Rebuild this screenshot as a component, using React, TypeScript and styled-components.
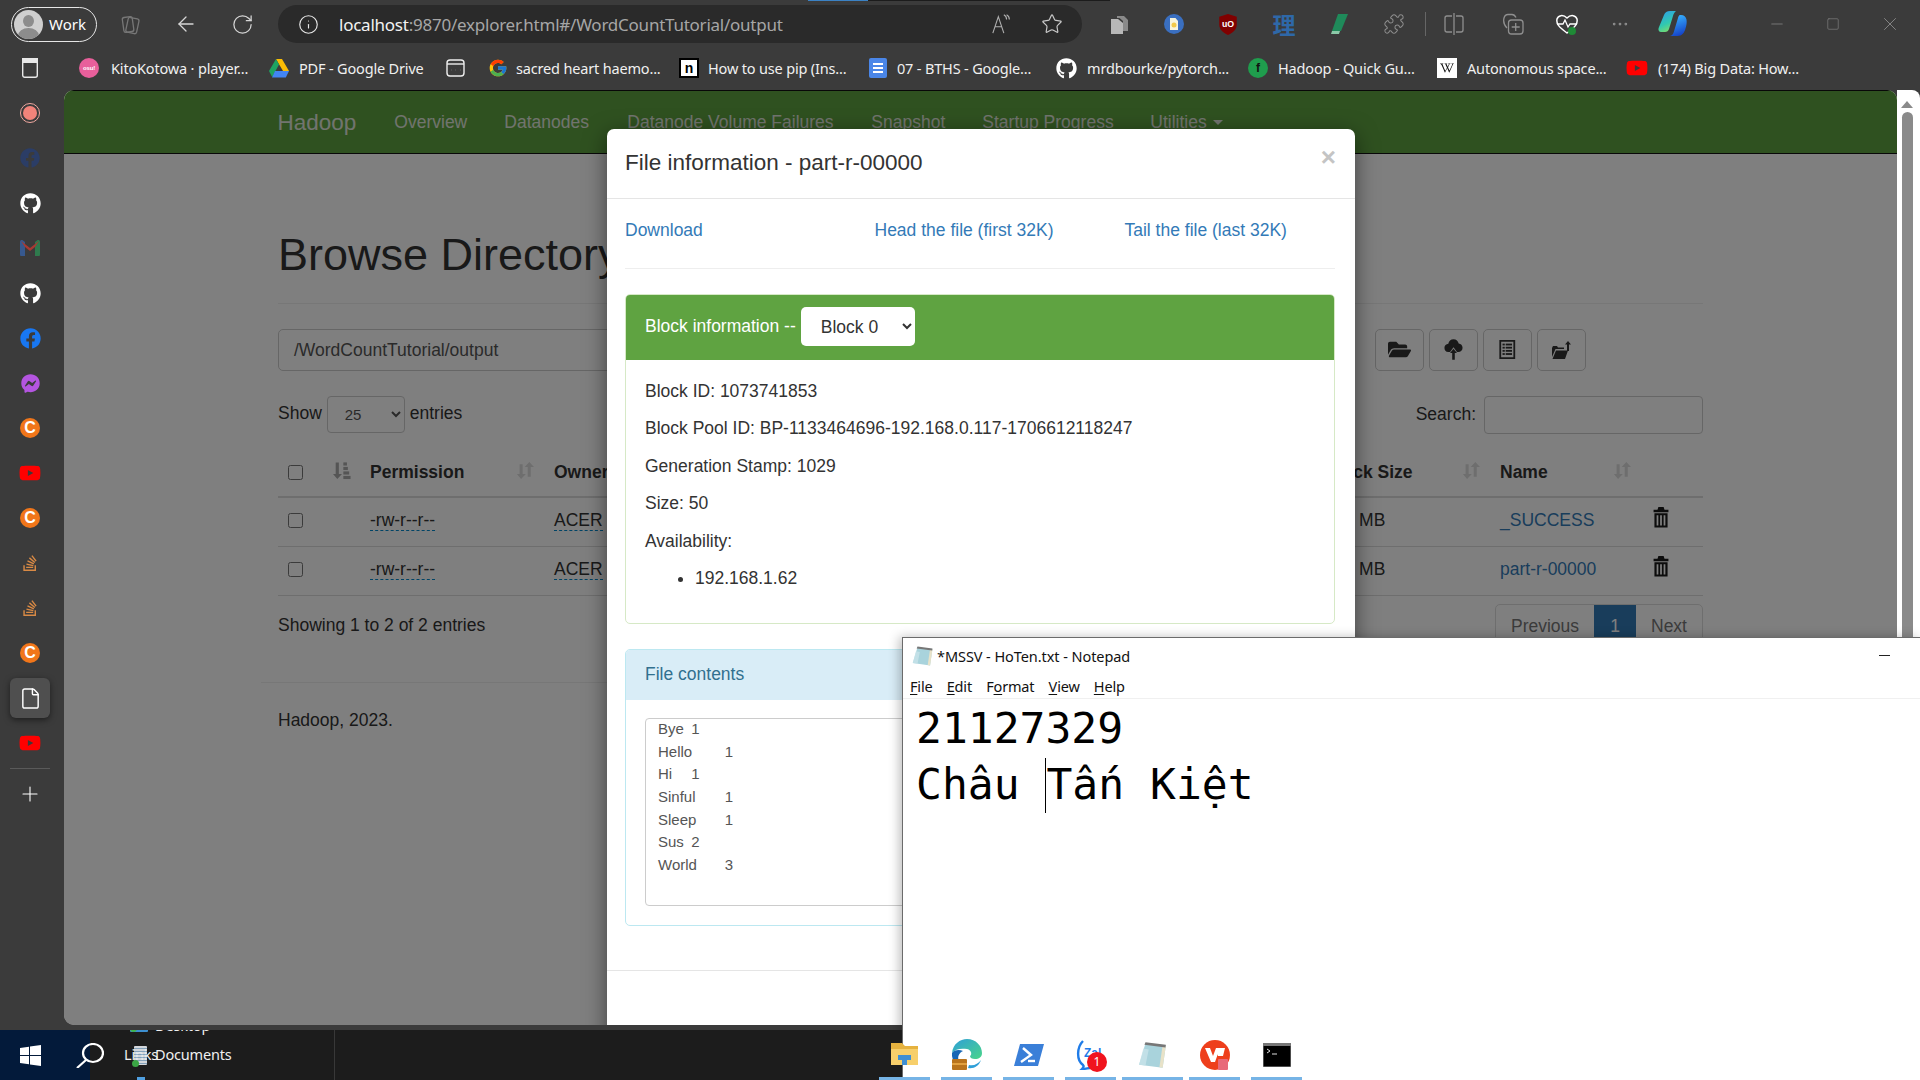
import React from "react";
import styled, { createGlobalStyle } from "styled-components";
import { ArrowLeft, RotateCw, Info, Star, Plus, File as FileIcon, Minus, X, Puzzle, MoreHorizontal, Square } from "lucide-react";
import { FaGithub, FaFacebook, FaFacebookMessenger, FaYoutube, FaStackOverflow, FaWikipediaW, FaFolderOpen } from "react-icons/fa";
import { FcGoogle } from "react-icons/fc";

const Global = createGlobalStyle`
  html, body { margin: 0; padding: 0; overflow: hidden; background: #3b3b3b; }
  * { box-sizing: border-box; }
`;
const chromeFont = `"Noto Sans", "Open Sans", sans-serif`;
const pageFont = `"Liberation Sans", Arial, sans-serif`;

const Screen = styled.div`
  position: relative; width: 1920px; height: 1080px; overflow: hidden;
  display: flex; flex-direction: column; background: #3b3b3b; font-family: ${pageFont};
`;
const Toolbar = styled.div`
  position: relative; height: 52px; flex: none; display: flex; align-items: center; color: #d6d6d6; padding-bottom: 4px;
`;
const TabAccent = styled.div`
  position: absolute; top: 0; left: 808px; width: 302px; height: 1px; background: #1c1c1c;
  &::before { content: ""; position: absolute; left: 0; top: 0; width: 60px; height: 1px; background: #3b82c4; }
`;
const ProfilePill = styled.div`
  margin-left: 11px; width: 86px; height: 35px; border: 1.5px solid #e6e6e6; border-radius: 18px;
  display: flex; align-items: center; gap: 6px; padding-left: 2px; color: #fff;
  font: 15px ${chromeFont};
`;
const Avatar = styled.div`
  position: relative; width: 29px; height: 29px; border-radius: 50%; background: #cfcfcf; overflow: hidden;
  &::before { content: ""; position: absolute; left: 9px; top: 5px; width: 11px; height: 12px; border-radius: 50%; background: #8c8c8c; }
  &::after { content: ""; position: absolute; left: 4px; top: 18px; width: 21px; height: 16px; border-radius: 50%; background: #8c8c8c; }
`;
const ToolIcon = styled.span<{ $w?: number; $gap?: number; $color?: string }>`
  display: flex; align-items: center; justify-content: center; flex: none;
  width: ${p => p.$w ?? 30}px; margin-left: ${p => p.$gap ?? 0}px; color: ${p => p.$color ?? "#d6d6d6"};
`;
const CjkIcon = styled(ToolIcon)`
  font: 700 23px "Noto Sans CJK SC", sans-serif;
`;
const Omnibox = styled.div`
  margin-left: 21px; width: 804px; height: 38px; border-radius: 19px; background: #2a2a2a;
  display: flex; align-items: center; padding-left: 20px; flex: none;
`;
const Url = styled.div`
  margin-left: 20px; flex: 1; font: 17px ${chromeFont}; letter-spacing: -0.24px; color: #a6a6a6; white-space: nowrap;
  b { font-weight: 400; color: #f2f2f2; }
`;
const VDivider = styled.div`
  width: 1px; height: 24px; background: #666; margin-left: 16px; flex: none;
`;
const BookmarkBar = styled.div`
  height: 38px; flex: none; display: flex; align-items: center; position: relative; padding: 0 0 6px 19px; color: #f0f0f0;
  font: 14.5px ${chromeFont}; letter-spacing: -0.17px;
`;
const Bookmark = styled.div<{ $w: number; $gap: number }>`
  width: ${p => p.$w}px; flex: none; display: flex; align-items: center; gap: ${p => p.$gap}px; white-space: nowrap;
`;
const Favicon = styled.span<{ $bg?: string; $color?: string; $r?: string; $size?: number; $line?: string }>`
  width: 20px; height: 20px; flex: none; display: flex; align-items: center; justify-content: center;
  background: ${p => p.$bg ?? "transparent"}; color: ${p => p.$color ?? "#fff"}; border-radius: ${p => p.$r ?? "0"};
  border: ${p => p.$line ?? "0"}; font: 700 ${p => p.$size ?? 12}px ${pageFont};
`;
const Main = styled.div`
  height: 935px; flex: none; display: flex;
`;
const Sidebar = styled.div`
  width: 64px; flex: none; display: flex; flex-direction: column; align-items: center; padding: 3px 4px 0 0;
`;
const SideSlot = styled.div<{ $active?: boolean }>`
  width: 40px; height: 40px; margin-bottom: 5px; flex: none; display: flex; align-items: center; justify-content: center;
  border-radius: 6px; background: ${p => (p.$active ? "#4f4f4f" : "transparent")};
  box-shadow: ${p => (p.$active ? "0 2px 6px rgba(0,0,0,.5)" : "none")}; color: #fff;
`;
const SideRule = styled.div`
  width: 40px; height: 1px; background: #5a5a5a; margin: 0 0 5px;
`;
const CBadge = styled.span`
  width: 20px; height: 20px; border-radius: 50%; background: #f1761a; color: #fff; display: flex; align-items: center; justify-content: center;
  font: 700 16px ${pageFont};
`;
const RecordDot = styled.span`
  width: 20px; height: 20px; border-radius: 50%; border: 1.5px solid #f0a8a0; display: flex; align-items: center; justify-content: center;
  &::after { content: ""; width: 14px; height: 14px; border-radius: 50%; background: #f2837a; }
`;
const Frame = styled.div`
  position: relative; width: 1833px; flex: none; overflow: hidden; background: #fff; border-radius: 10px 10px 0 10px;
  color: #333; font: 17.5px/25px ${pageFont};
`;
const ScrollTrack = styled.div`
  flex: 1; background: #fff; position: relative; border-radius: 0 8px 0 0; padding: 11px 7px 0 4px; display: flex; flex-direction: column; align-items: center; gap: 4px;
`;
const ScrollArrow = styled.div`
  width: 0; height: 0; border: 6px solid transparent; border-top: 0; border-bottom: 7px solid #8a8a8a;
`;
const ScrollThumb = styled.div`
  width: 11px; height: 600px; background: #8a8a8a; border-radius: 6px;
`;
const Navbar = styled.nav`
  height: 64px; background: #5fa341; border-top: 1px solid #111; border-bottom: 1px solid #111;
  display: flex; align-items: center; padding-left: 213.5px; color: #e2e8de; font-size: 17.5px;
`;
const Brand = styled.span`
  font-size: 22.5px; margin-right: 38px;
`;
const NavLink = styled.span<{ $w: number }>`
  width: ${p => p.$w}px; flex: none; white-space: nowrap;
`;
const Caret = styled.span`
  display: inline-block; margin-left: 6px; vertical-align: middle; border: 5px solid transparent; border-bottom: 0; border-top-color: currentColor;
`;
const Container = styled.div`
  width: 1425px; margin-left: 214px;
`;
const Title = styled.h1`
  margin: 76px 0 0; padding-bottom: 23px; font-size: 45px; line-height: 49.5px; font-weight: 500; border-bottom: 1px solid #eee; white-space: nowrap;
`;
const PathRow = styled.div`
  display: flex; margin-top: 25px; height: 42px; justify-content: space-between;
`;
const PathInput = styled.div`
  width: 720px; height: 42px; border: 1px solid #ccc; border-radius: 5px; padding: 0 15px; line-height: 40px; color: #555;
`;
const ActionGroup = styled.div`
  display: flex; gap: 5px; margin-right: 117px;
`;
const ActionButton = styled.div`
  width: 49px; height: 42px; border: 1px solid #ccc; border-radius: 5px; display: flex; align-items: center; justify-content: center; color: #333;
`;
const FilterRow = styled.div`
  display: flex; justify-content: space-between; align-items: center; margin-top: 25px; height: 38px;
`;
const ShowLabel = styled.label`
  display: flex; align-items: center; gap: 5px; margin-top: -3px;
`;
const SmallSelect = styled.select`
  width: 78px; height: 37px; margin-top: 3px; border: 1px solid #ccc; border-radius: 4px; background: #fff; padding-left: 13px; color: #555; font: 15px ${pageFont};
`;
const SearchLabel = styled.label`
  display: flex; align-items: center; gap: 8px; margin-right: 0;
`;
const SearchInput = styled.div`
  width: 219px; height: 38px; border: 1px solid #ccc; border-radius: 4px;
`;
const TableGrid = styled.div<{ $head?: boolean }>`
  display: grid; grid-template-columns: 63px 29px 184px 771px 175px 153px 50px;
  align-items: center; height: ${p => (p.$head ? "51px" : "49px")}; margin-top: ${p => (p.$head ? "13px" : "0")};
  border-bottom: ${p => (p.$head ? "2px solid #ddd" : "1px solid #ddd")};
  font-weight: ${p => (p.$head ? 700 : 400)}; padding: ${p => (p.$head ? "2px 0 0" : "0 0 3px")};
  &:last-of-type { border-bottom-color: transparent; }
`;
const Check = styled.input`
  width: 15px; height: 15px; margin: 0 0 0 10px; display: block;
`;
const SortCell = styled.span`
  display: flex; align-items: center; justify-content: space-between; white-space: nowrap; padding-right: 20px;
`;
const SortIconWrap = styled.span<{ $strong?: boolean; $shift?: number; $end?: number }>`
  display: inline-flex; color: ${p => (p.$strong ? "#aaa" : "#dcdcdc")}; margin-top: -4px;
  margin-left: ${p => p.$shift ?? 0}px; margin-right: ${p => p.$end ?? 0}px;
`;
const Editable = styled.span`
  border-bottom: 1px dashed #0088cc;
`;
const TrashCell = styled.span`
  display: flex; margin-top: -6px;
`;
const Link = styled.a`
  color: #337ab7;
`;
const FootRow = styled.div`
  display: flex; justify-content: space-between; align-items: flex-start; margin-top: 8px;
`;
const FootInfo = styled.span`
  padding-top: 9px;
`;
const Pagination = styled.div`
  display: flex; height: 42px; border: 1px solid #ddd; border-radius: 5px 5px 0 0; color: #777; width: 208px; overflow: hidden;
`;
const PageCell = styled.span<{ $active?: boolean; $w: number }>`
  width: ${p => p.$w}px; flex: none; text-align: center; line-height: 40px; padding-top: 1px; background: ${p => (p.$active ? "#337ab7" : "transparent")};
  color: ${p => (p.$active ? "#fff" : "inherit")};
`;
const FooterRule = styled.hr`
  width: 1463px; margin: 36px 0 0 -17px; border: 0; border-top: 1px solid #eee;
`;
const FooterText = styled.p`
  margin: 25px 0 0;
`;
const Backdrop = styled.div`
  position: absolute; inset: 0; background: rgba(0,0,0,.5);
`;
const Modal = styled.div`
  position: absolute; left: 543px; top: 39px; width: 748px; height: 960px; background: #fff; border-radius: 7px 7px 0 0;
  box-shadow: 0 6px 22px rgba(0,0,0,.5);
`;
const ModalHead = styled.div`
  height: 70px; padding: 0 19px 0 18px; display: flex; align-items: center; justify-content: space-between; border-bottom: 1px solid #e5e5e5;
`;
const ModalTitle = styled.h4`
  margin: -2px 0 0; font-size: 22.5px; font-weight: 500; line-height: 66px;
`;
const Close = styled.span`
  font: 700 26px/1 ${pageFont}; color: #c4c4c4; margin: -14px 0 0 0;
`;
const ModalBody = styled.div`
  padding: 19px 20px 0 18px;
`;
const LinkRow = styled.div`
  display: grid; grid-template-columns: 249.5px 250px 1fr; height: 25px;
`;
const ModalRule = styled.hr`
  margin: 25px 0 25px; border: 0; border-top: 1px solid #eee;
`;
const Panel = styled.div<{ $border: string }>`
  border: 1px solid ${p => p.$border}; border-radius: 5px; margin-bottom: 25px;
`;
const PanelHead = styled.div<{ $bg: string; $color: string; $h: number; $lift?: number }>`
  height: ${p => p.$h}px; background: ${p => p.$bg}; color: ${p => p.$color}; padding: 0 19px ${p => p.$lift ?? 0}px; display: flex; align-items: center; gap: 5px; border-radius: 4px 4px 0 0;
`;
const BlockSelect = styled.select`
  width: 114px; height: 39px; border: 0; border-radius: 5px; background: #fff; padding-left: 16px; color: #333; font: 17.5px ${pageFont}; margin-top: 1px;
`;
const PanelBody = styled.div`
  padding: 18.75px 19px;
`;
const InfoLine = styled.p`
  margin: 0 0 12.5px;
`;
const HostList = styled.ul`
  margin: 0 0 12.5px; padding-left: 50px;
`;
const ContentBox = styled.div`
  height: 188px; border: 1px solid #ccc; border-radius: 4px; padding: 0 12px; font: 15px/22.6px ${pageFont}; color: #555; white-space: pre; tab-size: 8; overflow: hidden;
`;
const ContentText = styled.div`
  margin-top: -1px;
`;
const ModalFooterRule = styled.div`
  margin: 44px -20px 0 -18px; border-top: 1px solid #e5e5e5;
`;
const Notepad = styled.div`
  position: absolute; left: 902px; top: 637px; right: 0; bottom: 0; background: #fff; border-top: 1px solid #6b6b6b; border-left: 1px solid #6b6b6b;
  display: flex; flex-direction: column; color: #000; box-shadow: -3px 0 10px rgba(0,0,0,.25);
`;
const NoteTitle = styled.div`
  height: 36px; flex: none; display: flex; align-items: center; padding-left: 9px; gap: 3px; font: 14.5px ${chromeFont}; letter-spacing: -0.07px; color: #111; position: relative;
`;
const NoteMin = styled.span`
  position: absolute; right: 30px; top: 17px; width: 11px; height: 1px; background: #222;
`;
const NoteMenu = styled.div`
  height: 25px; flex: none; display: flex; gap: 14.2px; padding-left: 7px; font: 14.5px/25px ${chromeFont}; letter-spacing: -0.17px; border-bottom: 1px solid #f0f0f0; color: #111;
  u { text-underline-offset: 2px; }
`;
const NoteText = styled.div`
  padding: 1px 0 0 13px; font: 43px/56px "DejaVu Sans Mono", monospace; white-space: pre; color: #000;
`;
const TextCaret = styled.span`
  display: inline-block; width: 0; height: 55px; border-left: 1px solid #000; vertical-align: -14px;
`;
const GapStrip = styled.div`
  height: 5px; flex: none;
`;
const Taskbar = styled.div`
  position: relative; height: 50px; flex: none; display: flex; z-index: 2;
`;
const StartButton = styled.div`
  width: 90px; background: #031a3a; display: flex; align-items: center; justify-content: center; color: #fff; padding-right: 30px;
`;
const SearchGlass = styled.span`
  position: absolute; left: 76px; top: 13px; display: flex; z-index: 1;
`;
const SearchSlot = styled.div`
  position: relative; width: 245px; background: #1c1c1c; border-right: 1px solid #383838; color: #f0f0f0; overflow: hidden; font: 14.5px ${chromeFont}; letter-spacing: -0.17px;
`;
const Clip = styled.span<{ $l: number; $t: number }>`
  position: absolute; left: ${p => p.$l}px; top: ${p => p.$t}px; white-space: nowrap;
`;
const DocGlyph = styled.span`
  position: absolute; left: 44px; top: 16px; width: 13px; height: 19px; opacity: .9; border-radius: 1px;
  background: repeating-linear-gradient(180deg, #e6ebf0 0 2px, #8fb0cc 2px 3px);
  &::after { content: ""; position: absolute; left: -2px; bottom: -2px; width: 7px; height: 7px; border-radius: 50%; background: #3fb54a; }
`;
const DesktopGlyph = styled.span`
  position: absolute; left: 40px; top: -6px; width: 18px; height: 8px; background: #3d8fd0; border-radius: 1px;
  &::after { content: ""; position: absolute; left: 0; bottom: 0; width: 7px; height: 7px; border-radius: 50%; background: #3fb54a; }
`;
const BlueTick = styled.span`
  position: absolute; left: 47px; bottom: 0; width: 8px; height: 3px; background: #4f9fe0;
`;
const RunningArea = styled.div`
  width: 567px; background: #1c1c1c;
`;
const TaskApps = styled.div`
  position: absolute; left: 879px; top: 0; height: 50px; display: flex;
`;
const TaskApp = styled.div<{ $w: number; $gap: number }>`
  position: relative; width: ${p => p.$w}px; margin-right: ${p => p.$gap}px; display: flex; align-items: center; justify-content: center; padding-bottom: 1px;
  &::after { content: ""; position: absolute; left: 0; right: 0; bottom: 0; height: 3px; background: #76b4e6; }
`;
const ZaloBadge = styled.span`
  position: absolute; left: 22px; top: 22px; width: 20px; height: 20px; border-radius: 50%; background: #f0141e; color: #fff; font: 12px/20px ${chromeFont}; text-align: center;
`;

const Sort = ({ active }: { active?: boolean }) => (
  <svg width="18" height="19" viewBox="0 0 20 20" fill="currentColor">
    {active ? (
      <>
        <path d="M3 1h3.500v13H10l-5.200 5.500L0 14h3z" />
        <rect x="11.500" y="1" width="4" height="3.500" />
        <rect x="11.500" y="6" width="5" height="3.500" />
        <rect x="11.500" y="11" width="6.500" height="3.500" />
        <rect x="11.500" y="16" width="8" height="3.500" />
      </>
    ) : (
      <>
        <path d="M4 3h3.400v11H11l-5.400 5.500L1 14h3z" />
        <path d="M13 17V6H9.600L14.800 .5 20 6h-3.600v11z" />
      </>
    )}
  </svg>
);
const Trash = () => (
  <svg width="16" height="21" viewBox="0 0 18 24" fill="#1a1a1a">
    <path d="M6 0h6l1 3h4.500v3H.5V3H5z" />
    <path fillRule="evenodd" d="M1.500 7h15v16.500h-15zM4 9.500V21h2V9.500zM8 9.500V21h2V9.500zM12 9.500V21h2V9.500z" />
  </svg>
);
const CloudUp = () => (
  <svg width="19" height="21" viewBox="0 0 22 24" fill="currentColor">
    <path d="M11 0c3.200 0 5.500 2.300 6 5 2.600.2 4.500 2.300 4.500 5s-2 5-5 5h-1.500L11 9.500 7 15H5c-3 0-4.500-2.300-4.500-5 0-2.600 2-4.600 4.500-4.800C5.500 2.300 7.800 0 11 0z" />
    <path d="M11 11l4 5h-2.500v8h-3v-8H7z" />
  </svg>
);
const ListAlt = () => (
  <svg width="17" height="19" viewBox="0 0 18 21" fill="currentColor">
    <path fillRule="evenodd" d="M0 0h17.500v21H0zM2 2v17h13.500V2z" />
    <rect x="3.500" y="4" width="2.500" height="2" /><rect x="7" y="4" width="7" height="2" />
    <rect x="3.500" y="7.500" width="2.500" height="2" /><rect x="7" y="7.500" width="7" height="2" />
    <rect x="3.500" y="11" width="2.500" height="2" /><rect x="7" y="11" width="7" height="2" />
    <rect x="3.500" y="14.500" width="2.500" height="2" /><rect x="7" y="14.500" width="7" height="2" />
  </svg>
);
const FolderUp = () => (
  <svg width="20" height="20" viewBox="0 0 20 20" fill="currentColor">
    <path d="M0 8l1-2h4l1 1.500h6V9H3.500L0 17zM4 10.500h12L13 19H.5z" />
    <path d="M16 1l3 3.500h-2V11h-2V4.500h-2z" />
  </svg>
);
const Drive = () => (
  <svg width="20" height="19" viewBox="0 0 20 19">
    <path d="M7 0h6l7 12h-6z" fill="#fbbc04" />
    <path d="M7 0l3 5.500L3.200 18 0 12z" fill="#1ea362" />
    <path d="M6 12h14l-3.200 6.500H3z" fill="#4285f4" />
  </svg>
);
const StackedTabs = () => (
  <svg width="24" height="24" viewBox="0 0 24 24" fill="none" stroke="#777" strokeWidth="1.300">
    <rect x="9" y="6" width="11" height="15" rx="2" transform="rotate(12 14 13)" />
    <rect x="5" y="5" width="10" height="15" rx="2" transform="rotate(-8 10 12)" />
  </svg>
);
const Copilot = () => (
  <svg width="30" height="28" viewBox="0 0 30 28">
    <defs>
      <linearGradient id="cpa" x1="0.2" y1="0" x2="0.6" y2="1"><stop offset="0" stopColor="#2f9fe8" /><stop offset="0.6" stopColor="#30c9b0" /><stop offset="1" stopColor="#7fdc6a" /></linearGradient>
      <linearGradient id="cpb" x1="0.3" y1="0" x2="0.6" y2="1"><stop offset="0" stopColor="#38b6ff" /><stop offset="1" stopColor="#1440c8" /></linearGradient>
    </defs>
    <path d="M12 1h6c-1.500 1-2.500 3-3 5l-4 13c-.6 2-2 3-4 3H3C1 22 0 20 .6 18L6 5c1-2.500 3-4 6-4z" fill="url(#cpa)" />
    <path d="M22 5h1c3 0 5 2 5.500 4.500.5 3 0 6-1 9-1 4-3.500 7.500-8 7.500h-8c2 0 3.500-1.500 4.300-4L20 8c.2-1 1-3 2-3z" fill="url(#cpb)" />
  </svg>
);
const Edge = () => (
  <svg width="32" height="32" viewBox="0 0 32 32">
    <defs><linearGradient id="edg" x1="0" y1="0" x2="1" y2="1"><stop offset="0" stopColor="#2f9fd8" /><stop offset="1" stopColor="#4ad58a" /></linearGradient></defs>
    <path d="M1 14C2 5 9 0 16 0c9 0 15 7 15 14 0 4-3 6-7 6-3 0-5-1-5-3 2-1 2-6-3-7-6-1-12 0-15 4z" fill="url(#edg)" />
    <path d="M1 14c2-3 7-4 11-2-4 2-6 6-4 10 1 2 3 5 8 6-8 1-16-5-15-14z" fill="#1766b5" />
    <path d="M18 26c5 1 9-1 12-5-2 6-7 9-13 8z" fill="#2f9fd8" />
    <rect x="1" y="20" width="15" height="11" rx="1" fill="#b9741c" />
    <rect x="1" y="24" width="15" height="2" fill="#e2a13f" />
  </svg>
);
const FolderColor = () => (
  <svg width="28" height="24" viewBox="0 0 28 24">
    <path d="M0 0h11l3 3h13v6H0z" fill="#e6b23f" />
    <path d="M0 6h27v16H0z" fill="#f7cf6b" />
    <path d="M7 12h13v5h-4v5h-5v-5H7z" fill="#3f8fd4" />
  </svg>
);
const PowerShell = () => (
  <svg width="30" height="24" viewBox="0 0 30 24">
    <path d="M6 1h24l-6 22H0z" fill="#3a7fd8" />
    <path d="M9 5l8 7-10 7" fill="none" stroke="#fff" strokeWidth="2.400" />
    <path d="M14 18h7" stroke="#fff" strokeWidth="2.400" />
  </svg>
);
const Zalo = () => (
  <svg width="30" height="30" viewBox="0 0 30 30" fill="none">
    <path d="M7 1C1 7 0 20 7 25c1 1 1 2-1 4 4 0 6-1 8-1" stroke="#1f7ce8" strokeWidth="2.400" />
    <text x="8" y="17" fontFamily="Liberation Sans" fontWeight="700" fontSize="12" fill="#1f7ce8">Zal</text>
  </svg>
);
const NotepadGlyph = ({ size = 28 }: { size?: number }) => (
  <svg width={size} height={size} viewBox="0 0 28 28">
    <path d="M7 3l19 2-3 21-22-3z" fill="#a9d3dc" />
    <path d="M23 5l3 .3-3 20.700-3-.5z" fill="#e8e2c8" />
    <path d="M7 2l19 2.500-.4 2.500L6 4.500z" fill="#777" />
    <path d="M5 8L1 23l6 .8 3-15z" fill="#c8e4ea" opacity=".8" />
  </svg>
);
const Wps = () => (
  <svg width="30" height="30" viewBox="0 0 30 30">
    <circle cx="15" cy="15" r="15" fill="#ee3f1c" />
    <path d="M5 8h5l3 8 3-8h4l-5 14h-4zM17 8h8l-2 8h-5" fill="#fff" />
    <rect x="18" y="19" width="10" height="11" rx="1" fill="#e86a7a" />
  </svg>
);
const Cmd = () => (
  <svg width="28" height="24" viewBox="0 0 28 24">
    <rect width="28" height="24" fill="#000" stroke="#999" />
    <rect x="0" y="0" width="28" height="3" fill="#777" />
    <path d="M4 6l3 2-3 2M9 11h5" stroke="#ddd" strokeWidth="1" fill="none" />
  </svg>
);
const WinLogo = () => (
  <svg width="21" height="21" viewBox="0 0 21 21" fill="#fff">
    <path d="M0 3l9-1.300V10H0zM10 1.500L21 0v10H10zM0 11h9v8.300L0 18zM10 11h11v10l-11-1.500z" />
  </svg>
);
const Glass = () => (
  <svg width="28" height="25" viewBox="0 0 28 25" fill="none" stroke="#fff" strokeWidth="2.200">
    <ellipse cx="17" cy="10" rx="10" ry="9" /><path d="M10 17L1 25" />
  </svg>
);
const SidePanelIcon = () => (
  <svg width="16" height="20" viewBox="0 0 16 20" fill="none" stroke="#e8e8e8" strokeWidth="1.400">
    <rect x=".7" y=".7" width="14.600" height="18.600" rx="2" /><rect x=".7" y=".7" width="14.600" height="3.600" fill="#e8e8e8" />
  </svg>
);
const ReadAloud = () => (
  <svg width="22" height="22" viewBox="0 0 24 22" fill="none" stroke="#b0b0b0" strokeWidth="1.200">
    <path d="M2 21L8 3l6 18M4.500 14h7" /><path d="M14 1c2 1 3 3 3 5M17 1c2 1 3 3 3 5" />
  </svg>
);
const Collections = () => (
  <svg width="19" height="19" viewBox="0 0 19 19">
    <path d="M7 1h7l4 4v11h-5V6L9.500 3H7z" fill="#8a8a8a" />
    <path d="M1 4h7l5 4v11H1z" fill="#b8b8b8" />
  </svg>
);
const HeartPulse = () => (
  <svg width="22" height="21" viewBox="0 0 22 21" fill="none">
    <path d="M11 19C3 13 0 10 1 5c1-3.500 6-5 10-1 4-4 9-2.500 10 1 1 5-2 8-10 14z" stroke="#fff" strokeWidth="1.500" />
    <path d="M1 10h6l2-4 3 7 2-3h7" stroke="#fff" strokeWidth="1.300" />
    <circle cx="16" cy="17" r="4" fill="#1f8a36" />
  </svg>
);
const AddTab = () => (
  <svg width="22" height="22" viewBox="0 0 22 22" fill="none" stroke="#8f8f8f" strokeWidth="1.300">
    <path d="M5 15C3 13 1 9 2 5c.5-2 2-3.500 4-3.500h4c2 0 3 1 4 3" /><rect x="6.500" y="7" width="14.500" height="14" rx="3" /><path d="M13.700 10v8M9.700 14h8" />
  </svg>
);
const SplitScreen = () => (
  <svg width="20" height="22" viewBox="0 0 20 22" fill="none" stroke="#8f8f8f" strokeWidth="1.300">
    <path d="M8 3H3a2 2 0 0 0-2 2v12a2 2 0 0 0 2 2h5M12 3h5a2 2 0 0 1 2 2v12a2 2 0 0 1-2 2h-5" /><path d="M10 0v22" />
  </svg>
);
const Shield = () => (
  <svg width="18" height="21" viewBox="0 0 20 24">
    <path d="M10 0l10 3v9c0 6-5 10-10 12C5 22 0 18 0 12V3z" fill="#800000" />
    <text x="10" y="15" textAnchor="middle" fill="#fff" fontFamily="Liberation Sans" fontSize="10" fontWeight="700">uO</text>
  </svg>
);
const BlueDoc = () => (
  <svg width="20" height="20" viewBox="0 0 20 20">
    <circle cx="10" cy="10" r="10" fill="#3a6fc0" />
    <path d="M6 4h5.500L14 7v9H6z" fill="#f6f4dc" />
    <circle cx="10" cy="11" r="2.500" fill="#f0c94a" />
  </svg>
);
const Pen = () => (
  <svg width="18" height="22" viewBox="0 0 18 22">
    <path d="M7 1h10L10 18H1z" fill="#1f8a5a" /><path d="M1 18h8l-1 3H0z" fill="#8cc9a8" />
  </svg>
);
const Docs = () => (
  <svg width="18" height="20" viewBox="0 0 18 20">
    <rect width="18" height="20" rx="2" fill="#4a86e8" />
    <path d="M4 6h10M4 10h10M4 14h10" stroke="#fff" strokeWidth="2" />
  </svg>
);
const DocTab = () => (
  <svg width="19" height="18" viewBox="0 0 19 18" fill="none" stroke="#eee" strokeWidth="1.400">
    <rect x="1" y="1" width="17" height="16" rx="3" /><path d="M1 5h17" /><path d="M5 11h.1M9.500 11h.1M14 11h.1" strokeWidth="2" />
  </svg>
);
const GmailDim = () => (
  <svg width="20" height="16" viewBox="0 0 20 16">
    <path d="M0 2c0-2 2-2.500 3-1.500L5 2v14H1.500C.5 16 0 15.500 0 14.500z" fill="#37598f" />
    <path d="M20 2c0-2-2-2.500-3-1.500L15 2v14h3.500c1 0 1.500-.5 1.500-1.500z" fill="#2f7a4d" />
    <path d="M1 1l9 7 9-7-4 6-5 4-5-4z" fill="#a83a33" />
  </svg>
);
const SO = () => <FaStackOverflow size={18} color="#d98a45" />;
const Yt = () => <FaYoutube size={22} color="#f00" />;

const sideItems: React.ReactNode[] = [
  <RecordDot key="r" />,
  <FaFacebook key="b" size={20} color="#2b3d66" />,
  <FaGithub key="g1" size={21} />,
  <GmailDim key="m" />,
  <FaGithub key="g2" size={21} />,
  <FaFacebook key="f" size={21} color="#1877f2" />,
  <FaFacebookMessenger key="ms" size={19} color="#b455e0" />,
  <CBadge key="c1">C</CBadge>,
  <Yt key="y1" />,
  <CBadge key="c2">C</CBadge>,
  <SO key="s1" />,
  <SO key="s2" />,
  <CBadge key="c3">C</CBadge>,
];

const bookmarks: { w: number; gap: number; icon: React.ReactNode; text: string }[] = [
  { w: 190, gap: 12, icon: <Favicon $bg="#e85f9b" $r="50%" $size={6}>osu!</Favicon>, text: "KitoKotowa · player..." },
  { w: 177, gap: 10, icon: <Drive />, text: "PDF - Google Drive" },
  { w: 42, gap: 10, icon: <DocTab />, text: "" },
  { w: 191, gap: 8, icon: <FcGoogle size={20} />, text: "sacred heart haemo..." },
  { w: 190, gap: 9, icon: <Favicon $bg="#fff" $color="#000" $line="2px solid #000" $size={14}>n</Favicon>, text: "How to use pip (Ins..." },
  { w: 187, gap: 10, icon: <Docs />, text: "07 - BTHS - Google..." },
  { w: 192, gap: 10, icon: <FaGithub size={21} color="#fff" />, text: "mrdbourke/pytorch..." },
  { w: 189, gap: 10, icon: <Favicon $bg="#1f9d4d" $r="50%" $color="#111">f</Favicon>, text: "Hadoop - Quick Gu..." },
  { w: 189, gap: 10, icon: <Favicon $bg="#fff" $color="#111"><FaWikipediaW size={14} /></Favicon>, text: "Autonomous space..." },
  { w: 190, gap: 10, icon: <FaYoutube size={22} color="#f00" />, text: "(174) Big Data: How..." },
];

const navs: [string, number][] = [
  ["Overview", 110], ["Datanodes", 123], ["Datanode Volume Failures", 244], ["Snapshot", 111], ["Startup Progress", 168],
];

const rows = [
  { name: "_SUCCESS" },
  { name: "part-r-00000" },
];

const taskApps: { w: number; gap: number; node: React.ReactNode }[] = [
  { w: 51, gap: 11, node: <FolderColor /> },
  { w: 51, gap: 11, node: <Edge /> },
  { w: 51, gap: 11, node: <PowerShell /> },
  { w: 51, gap: 6, node: <><Zalo /><ZaloBadge>1</ZaloBadge></> },
  { w: 61, gap: 6, node: <NotepadGlyph size={30} /> },
  { w: 51, gap: 11, node: <Wps /> },
  { w: 51, gap: 0, node: <Cmd /> },
];

export default function App() {
  return (
    <Screen>
      <Global />
      <Toolbar>
        <TabAccent />
        <ProfilePill><Avatar />Work</ProfilePill>
        <ToolIcon $gap={18}><StackedTabs /></ToolIcon>
        <ToolIcon $gap={26}><ArrowLeft size={24} strokeWidth={1.3} /></ToolIcon>
        <ToolIcon $gap={26}><RotateCw size={23} strokeWidth={1.3} /></ToolIcon>
        <Omnibox>
          <Info size={21} strokeWidth={1.3} color="#e8e8e8" />
          <Url><b>localhost</b>:9870/explorer.html#/WordCountTutorial/output</Url>
          <ToolIcon $w={28}><ReadAloud /></ToolIcon>
          <ToolIcon $w={28} $gap={22}><Star size={22} strokeWidth={1.3} color="#c8c8c8" /></ToolIcon>
          <ToolIcon $w={16} />
        </Omnibox>
        <ToolIcon $gap={22}><Collections /></ToolIcon>
        <ToolIcon $gap={25}><BlueDoc /></ToolIcon>
        <ToolIcon $gap={24}><Shield /></ToolIcon>
        <CjkIcon $gap={26} $color="#2e68a8">理</CjkIcon>
        <ToolIcon $gap={26}><Pen /></ToolIcon>
        <ToolIcon $gap={24}><Puzzle size={22} strokeWidth={1.1} color="#8f8f8f" /></ToolIcon>
        <VDivider />
        <ToolIcon $gap={13}><SplitScreen /></ToolIcon>
        <ToolIcon $gap={29}><AddTab /></ToolIcon>
        <ToolIcon $gap={24}><HeartPulse /></ToolIcon>
        <ToolIcon $gap={23}><MoreHorizontal size={20} strokeWidth={1.3} color="#8f8f8f" /></ToolIcon>
        <ToolIcon $gap={23}><Copilot /></ToolIcon>
        <ToolIcon $gap={74}><Minus size={18} strokeWidth={1} color="#8a8a8a" /></ToolIcon>
        <ToolIcon $gap={26}><Square size={14} strokeWidth={1} color="#8a8a8a" /></ToolIcon>
        <ToolIcon $gap={27}><X size={22} strokeWidth={1} color="#8a8a8a" /></ToolIcon>
      </Toolbar>
      <BookmarkBar>
        <ToolIcon $w={22}><SidePanelIcon /></ToolIcon>
        <ToolIcon $w={38} />
        {bookmarks.map(b => (
          <Bookmark key={b.text || "apps"} $w={b.w} $gap={b.gap}>{b.icon}{b.text}</Bookmark>
        ))}
      </BookmarkBar>
      <Main>
        <Sidebar>
          {sideItems.map((it, i) => <SideSlot key={i}>{it}</SideSlot>)}
          <SideSlot $active><FileIcon size={23} strokeWidth={1.5} /></SideSlot>
          <SideSlot><Yt /></SideSlot>
          <SideRule />
          <SideSlot><Plus size={24} strokeWidth={1.1} /></SideSlot>
        </Sidebar>
        <Frame>
          <Navbar>
            <Brand>Hadoop</Brand>
            {navs.map(([t, w]) => <NavLink key={t} $w={w}>{t}</NavLink>)}
            <NavLink $w={80}>Utilities<Caret /></NavLink>
          </Navbar>
          <Container>
            <Title>Browse Directory</Title>
            <PathRow>
              <PathInput>/WordCountTutorial/output</PathInput>
              <ActionGroup>
                <ActionButton><FaFolderOpen size={23} /></ActionButton>
                <ActionButton><CloudUp /></ActionButton>
                <ActionButton><ListAlt /></ActionButton>
                <ActionButton><FolderUp /></ActionButton>
              </ActionGroup>
            </PathRow>
            <FilterRow>
              <ShowLabel>Show <SmallSelect defaultValue="25"><option>25</option></SmallSelect> entries</ShowLabel>
              <SearchLabel>Search: <SearchInput /></SearchLabel>
            </FilterRow>
            <TableGrid $head>
              <Check type="checkbox" />
              <SortIconWrap $strong $shift={-8}><Sort active /></SortIconWrap>
              <SortCell>Permission<SortIconWrap><Sort /></SortIconWrap></SortCell>
              <SortCell>Owner</SortCell>
              <SortCell>Block Size<SortIconWrap><Sort /></SortIconWrap></SortCell>
              <SortCell>Name<SortIconWrap $end={2}><Sort /></SortIconWrap></SortCell>
              <span />
            </TableGrid>
            {rows.map(r => (
              <TableGrid key={r.name}>
                <Check type="checkbox" />
                <span />
                <span><Editable>-rw-r--r--</Editable></span>
                <span><Editable>ACER</Editable></span>
                <span>128 MB</span>
                <Link>{r.name}</Link>
                <TrashCell><Trash /></TrashCell>
              </TableGrid>
            ))}
            <FootRow>
              <FootInfo>Showing 1 to 2 of 2 entries</FootInfo>
              <Pagination>
                <PageCell $w={98}>Previous</PageCell>
                <PageCell $w={42} $active>1</PageCell>
                <PageCell $w={66}>Next</PageCell>
              </Pagination>
            </FootRow>
          </Container>
          <Container>
            <FooterRule />
            <FooterText>Hadoop, 2023.</FooterText>
          </Container>
          <Backdrop />
          <Modal>
            <ModalHead>
              <ModalTitle>File information - part-r-00000</ModalTitle>
              <Close>×</Close>
            </ModalHead>
            <ModalBody>
              <LinkRow>
                <Link>Download</Link>
                <Link>Head the file (first 32K)</Link>
                <Link>Tail the file (last 32K)</Link>
              </LinkRow>
              <ModalRule />
              <Panel $border="#d6e9c6">
                <PanelHead $bg="#5fa341" $color="#fff" $h={65} $lift={3}>
                  Block information --
                  <BlockSelect defaultValue="Block 0"><option>Block 0</option></BlockSelect>
                </PanelHead>
                <PanelBody>
                  <InfoLine>Block ID: 1073741853</InfoLine>
                  <InfoLine>Block Pool ID: BP-1133464696-192.168.0.117-1706612118247</InfoLine>
                  <InfoLine>Generation Stamp: 1029</InfoLine>
                  <InfoLine>Size: 50</InfoLine>
                  <InfoLine>Availability:</InfoLine>
                  <HostList><li>192.168.1.62</li></HostList>
                </PanelBody>
              </Panel>
              <Panel $border="#bce8f1">
                <PanelHead $bg="#d9edf7" $color="#31708f" $h={50}>File contents</PanelHead>
                <PanelBody>
                  <ContentBox><ContentText>{"Bye\t1\nHello\t1\nHi\t1\nSinful\t1\nSleep\t1\nSus\t2\nWorld\t3"}</ContentText></ContentBox>
                </PanelBody>
              </Panel>
              <ModalFooterRule />
            </ModalBody>
          </Modal>
        </Frame>
        <ScrollTrack>
          <ScrollArrow />
          <ScrollThumb />
        </ScrollTrack>
      </Main>
      <GapStrip />
      <Taskbar>
        <StartButton><WinLogo /></StartButton>
        <SearchGlass><Glass /></SearchGlass>
        <SearchSlot>
          <DesktopGlyph />
          <Clip $l={65} $t={-15}>Desktop</Clip>
          <Clip $l={34} $t={14}>Links</Clip>
          <DocGlyph />
          <Clip $l={65} $t={14}>Documents</Clip>
          <BlueTick />
        </SearchSlot>
        <RunningArea />
        <TaskApps>
          {taskApps.map((a, i) => <TaskApp key={i} $w={a.w} $gap={a.gap}>{a.node}</TaskApp>)}
        </TaskApps>
      </Taskbar>
      <Notepad>
        <NoteTitle>
          <NotepadGlyph size={22} />
          *MSSV - HoTen.txt - Notepad
          <NoteMin />
        </NoteTitle>
        <NoteMenu>
          <span><u>F</u>ile</span>
          <span><u>E</u>dit</span>
          <span>F<u>o</u>rmat</span>
          <span><u>V</u>iew</span>
          <span><u>H</u>elp</span>
        </NoteMenu>
        <NoteText>
          {"21127329\nChâu "}<TextCaret />{"Tấn Kiệt"}
        </NoteText>
      </Notepad>
    </Screen>
  );
}
